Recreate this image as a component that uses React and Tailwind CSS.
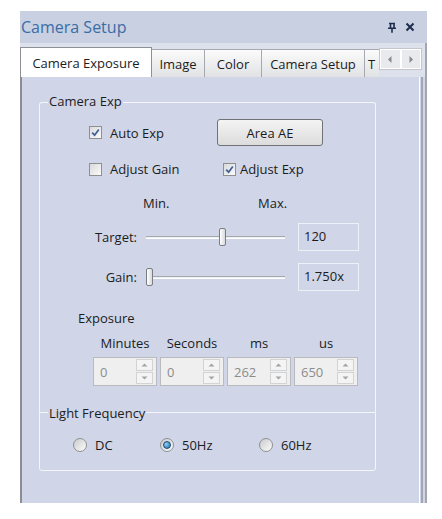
import React from "react";

function Check({ checked }) {
  return (
    <span className="w-[13px] h-[13px] border border-[#8e8f8f] bg-linear-to-br from-[#d9dadc] to-[#fbfbfb] flex items-center justify-center shrink-0">
      {checked && (
        <svg width="9" height="9" viewBox="0 0 9 9">
          <path d="M1.2 4.6 L3.6 7.2 L7.8 1.4" stroke="#3f5f94" strokeWidth="1.7" fill="none" />
        </svg>
      )}
    </span>
  );
}

function Radio({ checked }) {
  return (
    <span className="w-[14px] h-[14px] rounded-full border border-[#8f9092] bg-linear-to-br from-[#c9cacc] to-[#fdfdfd] flex items-center justify-center shrink-0">
      {checked && (
        <span className="w-[8px] h-[8px] rounded-full border border-[#1f4c73] bg-[radial-gradient(circle_at_35%_35%,#8fd0f5,#1b6aa6)]" />
      )}
    </span>
  );
}

function Slider({ thumb }) {
  return (
    <div className="relative w-[139px] h-[18px] flex items-center">
      <div className="w-full h-[3px] border-t border-[#a4a7ae] bg-[#eef0f4] border-b border-b-white" />
      <div className={"absolute top-0 w-[7px] h-[18px] rounded-[2px] border border-[#7a7d84] bg-linear-to-r from-white to-[#d8d9dc] " + thumb} />
    </div>
  );
}

function SpinBtn({ up }) {
  return (
    <div className="w-[17px] h-[12px] border border-[#d2d3d5] bg-[#f4f4f4] flex items-center justify-center">
      <svg width="7" height="4" viewBox="0 0 7 4">
        {up ? <path d="M0.5 3.5 L3.5 0.5 L6.5 3.5 Z" fill="#a3a3a3" /> : <path d="M0.5 0.5 L3.5 3.5 L6.5 0.5 Z" fill="#a3a3a3" />}
      </svg>
    </div>
  );
}

function Spin({ value }) {
  return (
    <div className="w-[64px] h-[29px] border border-[#b9babd] bg-[#efefef] flex items-center">
      <span className="flex-1 pl-[6px] text-[#8c8c8c]">{value}</span>
      <div className="flex flex-col gap-[1px] mr-[3px]">
        <SpinBtn up />
        <SpinBtn />
      </div>
    </div>
  );
}

function Tab({ children, w, active }) {
  if (active)
    return (
      <div className={"h-[30px] bg-white border border-[#8d9096] border-b-0 flex items-center justify-center shrink-0 " + w}>
        {children}
      </div>
    );
  return (
    <div className={"h-[28px] bg-linear-to-b from-[#fbfbfb] to-[#e1e2e4] border border-[#a5a8ae] border-b-0 border-l-0 flex items-center justify-center shrink-0 " + w}>
      {children}
    </div>
  );
}

export default function App() {
  return (
    <div className="w-[442px] h-[519px] bg-white font-['Open_Sans',sans-serif] text-[13px] text-[#1c1c1c] leading-[16px] pt-[11px] pl-[20px]">
      <div className="w-[407px] h-[492px] flex flex-col">
        {/* title bar */}
        <div className="h-[32px] bg-[#c8d0e2] flex items-center pl-[1px] pr-[12px] shrink-0">
          <span className="text-[16px] text-[#3a6da6] flex-1">Camera Setup</span>
          <svg width="10" height="11" viewBox="0 0 10 11" className="mr-[8px]">
            <path d="M2 1.5h6M3.5 1.5v4.5M7 1.5v4.5M1 6.2h8M5 6.2v4.5" stroke="#1d2d4c" strokeWidth="1.6" fill="none" />
          </svg>
          <svg width="10" height="10" viewBox="0 0 10 10">
            <path d="M1.5 1.5 L8.5 8.5 M8.5 1.5 L1.5 8.5" stroke="#1d2d4c" strokeWidth="2" fill="none" />
          </svg>
        </div>
        {/* tab strip */}
        <div className="h-[34px] bg-[#dde1eb] flex items-end shrink-0">
          <div className="w-[359px] flex items-end overflow-hidden">
            <Tab w="w-[132px]" active>Camera Exposure</Tab>
            <Tab w="w-[53px]">Image</Tab>
            <Tab w="w-[57px]">Color</Tab>
            <Tab w="w-[103px]">Camera Setup</Tab>
            <div className="h-[28px] w-[40px] bg-linear-to-b from-[#fbfbfb] to-[#e1e2e4] border-t border-[#a5a8ae] flex items-center pl-[3px] shrink-0">
              T
            </div>
          </div>
          <div className="self-start mt-[5px] h-[22px] w-[43px] border border-[#c4c6cb] bg-[#e9eaee] flex">
            <div className="flex-1 border border-white flex items-center justify-center">
              <svg width="4" height="7" viewBox="0 0 4 7"><path d="M3.5 0 L0 3.5 L3.5 7 Z" fill="#8a8a8a" /></svg>
            </div>
            <div className="flex-1 border border-white flex items-center justify-center">
              <svg width="4" height="7" viewBox="0 0 4 7"><path d="M0.5 0 L4 3.5 L0.5 7 Z" fill="#8a8a8a" /></svg>
            </div>
          </div>
          <div className="flex-1" />
          <div className="w-[4px] h-full border-r-2 border-[#a3a6ae]" />
        </div>
        {/* content */}
        <div className="flex-1 flex">
          <div className="w-[400px] bg-[#d0d6e8] border-l-2 border-[#8b8d93] border-r border-r-white pt-[25px] pl-[17px]">
            {/* Camera Exp group */}
            <div className="relative w-[337px] border border-b-0 border-[#f4f6fb] rounded-t-[3px] pb-[26px]">
              <span className="absolute top-[-11px] left-[8px] px-[1px] leading-[18px] bg-[#d0d6e8]">Camera Exp</span>
              <div className="mt-[16px] h-[27px] flex items-center pl-[49px]">
                <div className="w-[128px] flex items-center gap-[8px]">
                  <Check checked />
                  <span>Auto Exp</span>
                </div>
                <div className="w-[106px] h-[27px] rounded-[3px] border border-[#707277] bg-linear-to-b from-[#f4f4f4] to-[#dcdcdc] flex items-center justify-center">
                  Area AE
                </div>
              </div>
              <div className="mt-[13px] h-[20px] flex items-center pl-[49px]">
                <div className="w-[134px] flex items-center gap-[8px]">
                  <Check />
                  <span>Adjust Gain</span>
                </div>
                <div className="flex items-center gap-[4px]">
                  <Check checked />
                  <span>Adjust Exp</span>
                </div>
              </div>
              <div className="mt-[16px] h-[16px] flex items-center pl-[103px]">
                <span className="w-[115px]">Min.</span>
                <span>Max.</span>
              </div>
              <div className="mt-[12px] h-[28px] flex items-center">
                <span className="w-[97px] text-right">Target:</span>
                <div className="ml-[9px]">
                  <Slider thumb="left-[73px]" />
                </div>
                <div className="ml-[13px] w-[61px] h-[28px] border border-[#eef1f7] flex items-center pl-[5px] pb-[2px]">120</div>
              </div>
              <div className="mt-[12px] h-[28px] flex items-center">
                <span className="w-[97px] text-right">Gain:</span>
                <div className="ml-[9px]">
                  <Slider thumb="left-0" />
                </div>
                <div className="ml-[13px] w-[61px] h-[28px] border border-[#eef1f7] flex items-center pl-[5px] pb-[2px]">1.750x</div>
              </div>
              <div className="mt-[19px] h-[16px] pl-[38px]">Exposure</div>
              <div className="mt-[9px] h-[16px] pl-[53px] flex gap-[3px]">
                <span className="w-[64px] text-center">Minutes</span>
                <span className="w-[64px] text-center">Seconds</span>
                <span className="w-[64px] text-center">ms</span>
                <span className="w-[64px] text-center">us</span>
              </div>
              <div className="mt-[6px] h-[29px] pl-[53px] flex gap-[3px]">
                <Spin value="0" />
                <Spin value="0" />
                <Spin value="262" />
                <Spin value="650" />
              </div>
            </div>
            {/* Light Frequency group */}
            <div className="relative w-[337px] border border-[#f4f6fb] rounded-b-[3px] pb-[15px]">
              <span className="absolute top-[-9px] left-[8px] px-[1px] leading-[18px] bg-[#d0d6e8]">Light Frequency</span>
              <div className="mt-[22px] h-[20px] flex items-center pl-[33px]">
                <div className="w-[87px] flex items-center gap-[8px]">
                  <Radio />
                  <span>DC</span>
                </div>
                <div className="w-[99px] flex items-center gap-[8px]">
                  <Radio checked />
                  <span>50Hz</span>
                </div>
                <div className="flex items-center gap-[8px]">
                  <Radio />
                  <span>60Hz</span>
                </div>
              </div>
            </div>
          </div>
          <div className="w-[1px] bg-[#d0d6e8]" />
          <div className="w-[2px] bg-[#a3a6ae]" />
          <div className="w-[2px] bg-[#d0d6e8]" />
          <div className="w-[2px] bg-[#a3a6ae]" />
        </div>
      </div>
    </div>
  );
}
